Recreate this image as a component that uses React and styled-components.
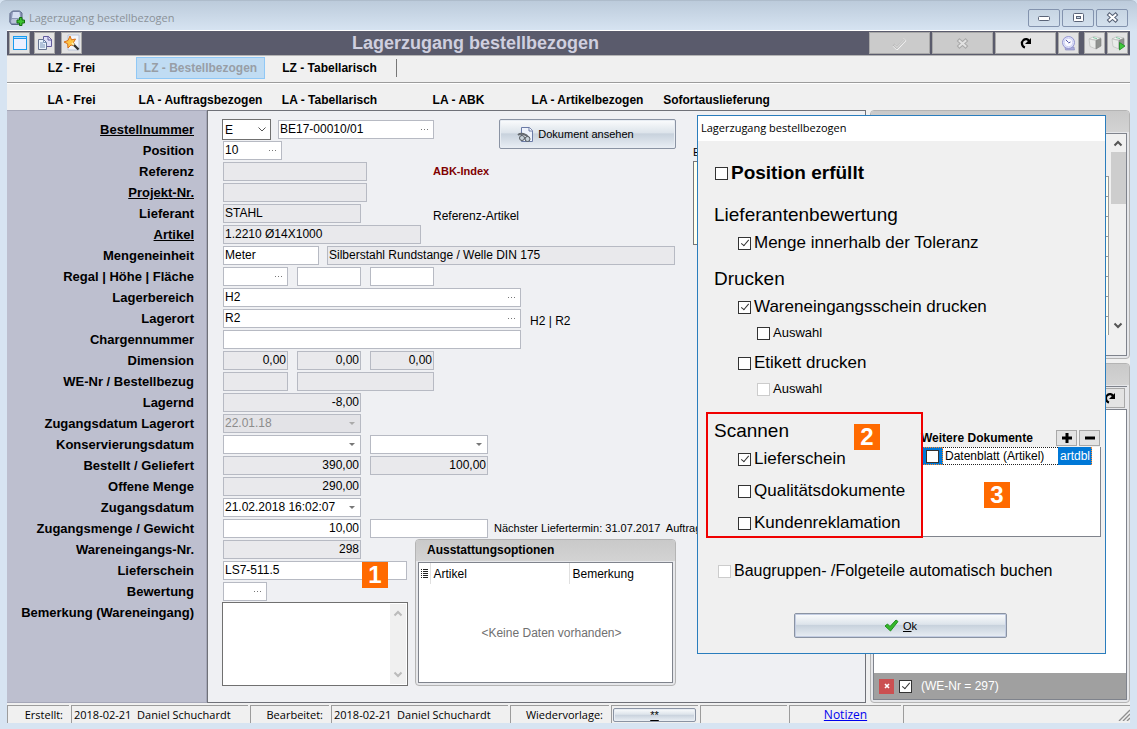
import React from "react";
import styled, { createGlobalStyle, css } from "styled-components";

const ui = `"Open Sans", "Noto Sans", sans-serif`;
const form = `"Liberation Sans", Arial, sans-serif`;

const GlobalStyle = createGlobalStyle`
  *, *::before, *::after { box-sizing: border-box; }
  html, body { margin: 0; padding: 0; }
  body { font: 12px/16px ${form}; color: #000; background: #d7e4f2; }
  button, input, select, textarea { font: inherit; color: inherit; margin: 0; padding: 0; border-radius: 0; }
  svg { display: block; flex: none; }
`;

/* ---------- window ---------- */

const Window = styled.main`
  position: relative;
  display: flex;
  flex-direction: column;
  min-height: 100vh;
  padding: 0 7px 6px;
  border-top: 1px solid #aebccb;
  border-radius: 6px 6px 0 0;
  background: linear-gradient(#bccbdb, #d7e4f2 30px);
  overflow: hidden;
`;

const TitleBar = styled.header`
  display: flex;
  align-items: center;
  gap: 4px;
  height: 29px;
  padding: 4px 2px 0;
  font: 11px/18px ${ui};
  color: #8b9299;
`;

const WindowButtons = styled.div`
  display: flex;
  gap: 2px;
  margin-left: auto;
`;

const WindowButton = styled.button`
  display: grid;
  place-items: center;
  width: 32px;
  height: 18px;
  border: 1px solid #8393ae;
  border-radius: 2px;
  background: linear-gradient(#c7d5e3, #d3e0ed);
`;

const Toolbar = styled.div`
  display: flex;
  align-items: center;
  gap: 2px;
  height: 25px;
  padding: 0 2px;
  border-top: 1px solid #fff;
  background: #5a5b6c;
`;

const ToolButton = styled.button`
  display: grid;
  place-items: center;
  width: ${(p) => (p.$wide ? 61 : 21)}px;
  height: 22px;
  border: 1px solid #a8a8a8;
  background: ${(p) => (p.disabled ? "#cbcbcb" : "#e3e3e3")};
`;

const ToolGap = styled.span`
  width: ${(p) => p.$w}px;
`;

const ToolTitle = styled.h1`
  flex: 1;
  margin: 0;
  text-align: center;
  font: bold 18px/22px ${form};
  color: #cfcfdf;
`;

/* ---------- navigation ---------- */

const Nav = styled.nav`
  display: flex;
  align-items: flex-start;
  height: ${(p) => (p.$first ? 28 : 27)}px;
  background: #f0f0f0;
  border-top: ${(p) => (p.$first ? "1px solid #b5b5b5" : "1px solid #fff")};
  border-bottom: ${(p) => (p.$first ? "1px solid #9c9c9c" : "0")};
  padding-top: ${(p) => (p.$first ? 1 : 5)}px;
`;

const NavItem = styled.button`
  width: 129px;
  height: 22px;
  border: 1px solid ${(p) => (p.$current ? "#90c8f6" : "transparent")};
  background: ${(p) => (p.$current ? "#c0dcf3" : "transparent")};
  color: ${(p) => (p.$current ? "#989ea6" : "#000")};
  font-weight: bold;
  white-space: nowrap;
`;

const NavDivider = styled.span`
  width: 1px;
  height: 18px;
  margin: 2px 0 0 2px;
  background: #777;
`;

/* ---------- work area ---------- */

const Work = styled.div`
  flex: 1;
  display: grid;
  grid-template-columns: 200px minmax(0, 1fr) 260px;
  background: #f0f0f0;
`;

const Labels = styled.div`
  display: flex;
  flex-direction: column;
  padding: 8px 12px 0 0;
  border: solid #a5a7b8;
  border-width: 1px 1px 1px 0;
  background: #bdbfcf;
`;

const Caption = styled.label`
  height: 21px;
  font: bold 13px/21px ${form};
  text-align: right;
  white-space: nowrap;
  text-decoration: ${(p) => (p.$link ? "underline" : "none")};
`;

const Form = styled.form`
  margin-right: 4px;
  padding: 8px 0 0 14px;
  border: 1px solid #6f7178;
  background: #eff0f3;
  font-size: 12px;
  overflow: hidden;
`;

const FormTop = styled.div`
  display: flex;
`;

const FormTopRows = styled.div`
  width: 454px;
`;

const Split = styled.div`
  display: flex;
  justify-content: space-between;
  height: 42px;
`;

const Row = styled.div`
  display: flex;
  align-items: center;
  gap: ${(p) => p.$gap ?? 9}px;
  height: 21px;
  padding-left: ${(p) => (p.$flush ? 0 : 1)}px;
`;

const Slot = styled.div`
  width: 201px;
`;

const Cluster = styled.div`
  display: flex;
  gap: 9px;
`;

const Note = styled.span`
  align-self: ${(p) => (p.$low ? "flex-end" : "center")};
  font-size: ${(p) => (p.$small ? 11 : 12)}px;
  line-height: 15px;
  font-weight: ${(p) => (p.$alert ? "bold" : "normal")};
  color: ${(p) => (p.$alert ? "#800000" : "#000")};
  white-space: pre;
`;

const FieldBox = styled.span`
  display: flex;
  align-items: center;
  width: ${(p) => p.$w}px;
  height: 19px;
  border: 1px solid #b7bac3;
  background: ${(p) => (p.$off ? "#e3e3e7" : p.$ro ? "#e9e9ec" : "#fff")};
  color: ${(p) => (p.$off ? "#8c8c8c" : "#000")};
`;

const FieldInput = styled.input`
  flex: 1;
  min-width: 0;
  height: 17px;
  padding: 0 1px;
  border: 0;
  outline: 0;
  background: transparent;
  text-align: ${(p) => (p.$right ? "right" : "left")};
  line-height: 17px;
`;

const FieldButton = styled.button`
  display: grid;
  place-items: center;
  width: 17px;
  height: 17px;
  border: 0;
  background: transparent;
`;

const SelectBox = styled.span`
  position: relative;
  width: 49px;
  height: 21px;

  svg {
    position: absolute;
    right: 4px;
    top: 7px;
    pointer-events: none;
  }
`;

const Select = styled.select`
  appearance: none;
  width: 100%;
  height: 21px;
  padding: 0 2px;
  border: 1px solid #707070;
  background: #fff;
`;

const GlossButton = styled.button`
  display: flex;
  align-items: center;
  justify-content: center;
  gap: 4px;
  width: ${(p) => p.$w}px;
  height: ${(p) => p.$h}px;
  padding: 0 ${(p) => p.$after ?? 0}px 0 0;
  border: 1px solid #8a93a3;
  border-radius: 2px;
  box-shadow: inset 0 0 0 1px ${(p) => (p.$focus ? "#c3cde2" : "#e8edf3")};
  background: linear-gradient(#fbfcfd, #dde4eb 45%, #c8d2dd 50%, #e9eef4);
  font: 11px/14px ${form};
`;

const SideNote = styled.div`
  flex: 1;
  margin: 24px 6px 0 17px;
  font-size: 11px;
`;

const SideNoteLabel = styled.label`
  display: block;
  height: 18px;
  line-height: 18px;
`;

const SideNoteText = styled.textarea`
  display: block;
  width: 100%;
  height: 84px;
  border: 1px solid #777;
  background: #ffffee;
  resize: none;
`;

const FormBottom = styled.div`
  display: flex;
  gap: 7px;
`;

const FormBottomRows = styled.div`
  width: 186px;
`;

const Anchor = styled.div`
  position: relative;
`;

const Memo = styled.div`
  display: flex;
  height: 84px;
  border: 1px solid #707070;
  background: #fff;
  padding: 1px;
`;

const MemoText = styled.textarea`
  flex: 1;
  min-width: 0;
  border: 0;
  outline: 0;
  resize: none;
  background: transparent;
`;

const ScrollTrack = styled.div`
  display: flex;
  flex-direction: column;
  align-items: center;
  justify-content: space-between;
  width: 16px;
  padding: 6px 0;
  background: #f0f0f0;
`;

const ScrollThumb = styled.div`
  width: 15px;
  height: 52px;
  margin-top: 5px;
  margin-bottom: auto;
  background: #cdcdcd;
`;

/* numbered call-out markers */
const Marker = styled.span`
  position: absolute;
  z-index: 2;
  top: ${(p) => p.$top}px;
  right: ${(p) => p.$right}px;
  width: 26px;
  height: 26px;
  background: #ff6a00;
  color: #fff;
  text-align: center;
  font: bold 24px/26px ${form};
`;

/* ---------- grouped panels ---------- */

const Panel = styled.section`
  display: flex;
  flex-direction: column;
  border: 1px solid #b4b4b4;
  border-radius: 4px;
  background: #e6e7ea;
  padding: 0 2px 2px;
`;

const OptionsPanel = styled(Panel)`
  width: 261px;
  height: 147px;
`;

const PanelTitle = styled.h2`
  margin: 0 -2px 1px;
  height: 21px;
  padding-left: 11px;
  border-radius: 3px 3px 0 0;
  background: linear-gradient(#c9c9c9, #d3d3d3);
  font: bold 12px/20px ${form};
`;

const PanelFrame = styled.div`
  flex: 1;
  display: flex;
  flex-direction: ${(p) => (p.$row ? "row" : "column")};
  padding-bottom: ${(p) => (p.$row ? 20 : 0)}px;
  border: 1px solid #7f838c;
  background: ${(p) => (p.$row ? "#f0f0f0" : "#fff")};
  min-height: 0;
`;

const OptionsTable = styled.table`
  width: 100%;
  table-layout: fixed;
  border-collapse: collapse;
  font-size: 12px;

  th {
    height: 21px;
    padding: 0 3px;
    border-right: 1px solid #e0e0e0;
    text-align: left;
    font-weight: normal;
  }
  th:first-child { width: 11px; padding: 0 2px; }
  th:nth-child(2) { width: 139px; }
  th:last-child { border-right: 0; }
  td {
    height: 98px;
    padding: 0 0 0 12px;
    text-align: center;
    color: #707070;
  }
`;

const Side = styled.aside`
  display: flex;
  flex-direction: column;
  gap: 4px;
`;

const SideTop = styled(Panel)`
  height: 249px;
`;

const SideBottom = styled(Panel)`
  flex: 1;
`;

const RecordGrid = styled.div`
  flex: 1;
  margin: 42px 1px 0 0;
  border-top: 1px solid #9a9a9a;
  border-right: 1px solid #9a9a9a;
  background: repeating-linear-gradient(#fffff0 0 19px, #9a9a9a 19px 20px);
`;

const SideTools = styled.div`
  display: flex;
  justify-content: flex-end;
  padding: 1px 2px;
  border-top: 1px solid #7f838c;
  height: 23px;
`;

const RefreshButton = styled.button`
  display: grid;
  place-items: center;
  width: 31px;
  height: 20px;
  border: 1px solid #a8a8a8;
  background: #e3e3e3;
`;

const FilterBar = styled.div`
  display: flex;
  align-items: center;
  gap: 5px;
  height: 26px;
  margin-top: auto;
  padding-left: 5px;
  background: #a0a0a0;
  color: #fff;
`;

const FilterLabel = styled.label`
  display: flex;
  align-items: center;
  gap: 9px;
`;

const ClearButton = styled.button`
  display: grid;
  place-items: center;
  width: 15px;
  height: 15px;
  border: 0;
  background: #cb5051;
`;

/* ---------- dialog ---------- */

const Dialog = styled.section`
  position: absolute;
  z-index: 5;
  top: 114px;
  right: 31px;
  width: 409px;
  padding-bottom: 15px;
  border: 1px solid #2a7dbd;
  background: #f0f0f0;
`;

const DialogTitle = styled.h2`
  margin: 0;
  height: 25px;
  padding-left: 3px;
  background: #fff;
  font: 11px/24px ${ui};
`;

const DialogBody = styled.div`
  padding: 20px 4px 0 8px;
`;

const Block = styled.div`
  display: flex;
  flex-direction: column;
  gap: 4px;
  padding-left: 8px;
  margin-bottom: ${(p) => p.$after ?? 0}px;
`;

const Heading = styled.h3`
  margin: 0;
  font: 19px/24px ${form};
`;

const tick = css`
  &:checked::after {
    content: "";
    position: absolute;
    left: 4px;
    top: 0;
    width: 4px;
    height: 8px;
    border: solid #333;
    border-width: 0 1px 1px 0;
    transform: rotate(40deg);
  }
`;

const Box = styled.input.attrs({ type: "checkbox" })`
  appearance: none;
  position: relative;
  flex: none;
  width: 13px;
  height: 13px;
  border: 1px solid #333;
  background: #fff;
  ${tick}
  &:disabled { border-color: #ccc; }
`;

const indent = { 1: 24, 2: 43, wide: 4 };

const Check = styled.label`
  display: flex;
  align-items: center;
  gap: 3px;
  font-size: ${(p) => p.$size ?? 17}px;
  line-height: ${(p) => (p.$level === 2 ? 20 : 24)}px;
  font-weight: ${(p) => (p.$strong ? "bold" : "normal")};
  padding-left: ${(p) => indent[p.$level] ?? 1}px;
  white-space: nowrap;
`;

const ScanArea = styled.div`
  display: flex;
  margin-bottom: 21px;
`;

const ScanBox = styled.div`
  position: relative;
  z-index: 1;
  width: 217px;
  height: 126px;
  padding: 5px 0 0 6px;
  border: 2px solid #f00000;
`;

const ScanList = styled.div`
  display: flex;
  flex-direction: column;
  gap: 8px;
  margin-top: 4px;
`;

const Documents = styled.div`
  flex: 1;
  display: flex;
  flex-direction: column;
  margin-left: -2px;
  padding: 18px 0 1px;
`;

const DocumentsHead = styled.div`
  display: flex;
  align-items: flex-start;
  gap: 2px;
  height: 17px;
  padding-right: 1px;
`;

const DocumentsTitle = styled.h4`
  flex: 1;
  margin: 0;
  font: bold 12px/16px ${form};
  white-space: nowrap;
`;

const SmallButton = styled.button`
  display: grid;
  place-items: center;
  width: 21px;
  height: 16px;
  border: 1px solid #a8a8a8;
  background: #e3e3e3;
`;

const DocumentsList = styled.div`
  position: relative;
  flex: 1;
  border: solid #7f838c;
  border-width: 0 1px 1px 0;
  background: #fff;
`;

const DocumentRow = styled.div`
  display: flex;
  align-items: center;
  height: 18px;
  margin-right: 8px;
  font-size: 12px;
  line-height: 18px;
`;

const DocumentName = styled.label`
  flex: 1;
  display: flex;
  align-items: center;
  gap: 2px;
  height: 18px;
  border: dotted #222;
  border-width: 1px 0;
  white-space: nowrap;
`;

const DocumentPick = styled.span`
  display: grid;
  place-items: center;
  width: 22px;
  height: 18px;
  border: 1px dotted #ff8728;
  background: #0078d7;
`;

const DocumentCode = styled.span`
  height: 18px;
  padding: 0 1px 0 2px;
  border-right: 1px dotted #ff8728;
  background: #0078d7;
  color: #fff;
`;

const Actions = styled.div`
  display: flex;
  justify-content: center;
  padding: 30px 6px 0 0;
`;

/* ---------- status bar ---------- */

const StatusBar = styled.footer`
  display: flex;
  gap: 2px;
  height: 20px;
  padding-top: 2px;
  background: #f0f0f0;
  font: 11px/17px ${ui};
`;

const StatusCell = styled.div`
  display: flex;
  align-items: center;
  justify-content: ${(p) => p.$align ?? "flex-start"};
  width: ${(p) => (p.$w ? `${p.$w}px` : "auto")};
  flex: ${(p) => (p.$w ? "none" : 1)};
  height: 18px;
  padding: 0 ${(p) => p.$pad ?? 2}px;
  border: solid #9c9c9c;
  border-width: 1px 0 0 1px;
  white-space: pre;
`;

const StatusLink = styled.a`
  color: #0000ee;
  font-size: 12px;
`;

/* ---------- drawings ---------- */

const AppIcon = () => (
  <svg width="16" height="16" viewBox="0 0 16 16">
    <path d="M1 3.500 3.500 1h7L13 3v7l-2 4.500H2.500L.8 12z" fill="#8d98b8" stroke="#5d6989" />
    <path d="M4 2h6.500l.8 6H3z" fill="#d5def2" />
    <path d="m2 11 1-2h9l-1 4H2.500z" fill="#b9c2d8" />
    <path d="M10.500 7.500h2.500V10h2.500v3H13v2.500h-2.500V13H8v-3h2.500z" fill="#3ec331" stroke="#146f10" />
  </svg>
);

const WindowIcon = () => (
  <svg width="16" height="16" viewBox="0 0 16 16">
    <rect x="1.500" y="1.500" width="13" height="13" fill="#eef0ff" stroke="#1a9bf0" />
    <path d="M1 1h14v3H1z" fill="#1a9bf0" />
    <path d="M2 2h12v1H2z" fill="#a9dcff" />
  </svg>
);

const CopyIcon = () => (
  <svg width="16" height="16" viewBox="0 0 16 16">
    <path d="M6.500 1.500h5l3 3v7h-8z" fill="#dfe0f8" stroke="#615b9c" />
    <path d="M11 1v4h4" fill="none" stroke="#615b9c" />
    <path d="M1.500 4.500h5l3 3v7h-8z" fill="#e8f2fb" stroke="#677591" />
    <path d="M6.500 4.500v3h3M3 8h3M3 10h5M3 12h5" fill="none" stroke="#7b94b8" />
  </svg>
);

const WandIcon = () => (
  <svg width="18" height="18" viewBox="0 0 18 18">
    <path d="M5 1h11v15H5z" fill="#f2f5fb" stroke="#b9c4d8" />
    <path d="m7 2 1.500 3.800L12.500 5 10.500 8.500 12 12 8 11 5 14l-.3-4.200L1 8l4-1.500z" fill="#ffc545" stroke="#d9701a" />
    <path d="m10 10 5.500 5.500" stroke="#333" strokeWidth="2.400" />
    <path d="m9 9 2 2" stroke="#fff2b0" strokeWidth="2" />
  </svg>
);

const TickIcon = () => (
  <svg width="15" height="13" viewBox="0 0 15 13">
    <path d="m2 8 3 3 8-8.500" fill="none" stroke="#fafafa" strokeWidth="3.600" />
    <path d="m1.700 7.500 3.100 3 7.700-8" fill="none" stroke="#b4b4b4" strokeWidth="3" />
    <path d="m2.200 7.800 2.700 2.500 7.500-7.800" fill="none" stroke="#d2d2d2" strokeWidth="1.600" />
  </svg>
);

const CrossIcon = ({ dark }) => (
  <svg width="13" height="11" viewBox="0 0 13 11">
    <path d="m2 1.500 9 8M11 1.500l-9 8" stroke={dark ? "#566075" : "#a9a9a9"} strokeWidth="4" />
    <path d="m2.800 2.200 7.400 6.600M10.200 2.200 2.800 8.800" stroke={dark ? "#fff" : "#e2e2e2"} strokeWidth="2" />
  </svg>
);

const RefreshIcon = () => (
  <svg width="12" height="12" viewBox="0 0 12 12">
    <path d="M5 10.500C1.500 9.500 1 5 3.500 3c2-1.500 4.500-1 5.500 1" fill="none" stroke="#000" strokeWidth="2.200" />
    <path d="M11 1v6H5z" fill="#000" />
  </svg>
);

const ClockIcon = () => (
  <svg width="16" height="16" viewBox="0 0 16 16">
    <path d="M4 12h9l.5 3h-9z" fill="#a9aadb" stroke="#8587bd" strokeWidth=".6" />
    <circle cx="7.500" cy="7.500" r="6" fill="#dcdffc" stroke="#9496cf" />
    <circle cx="7.500" cy="7.500" r="4.200" fill="#f8f8ff" stroke="#c9cbee" strokeWidth=".8" />
    <path d="M7.500 7.500 5 5M7.500 8l2-1" stroke="#5458a5" />
  </svg>
);

const CubeIcon = ({ play }) => (
  <svg width="16" height="16" viewBox="0 0 16 16">
    <path d="m2 4 5-2.500L14 3 9 5z" fill="#f4f6f4" stroke="#b0b4b0" strokeWidth=".6" />
    <path d="m2 4 7 1.500V14l-6-2.500z" fill="#e9ebe9" stroke="#b5b8b5" strokeWidth=".6" />
    <path d="m9 5.500 5-2V11l-5 3z" fill="#8f928f" stroke="#808280" strokeWidth=".6" />
    <path d="m6 2.500 4 1.200" stroke="#7fc7a3" />
    {play && <path d="M9.500 7.500v7.500l5.500-4z" fill="#3fc83a" stroke="#1d8a22" strokeWidth=".8" />}
  </svg>
);

const DocumentIcon = () => (
  <svg width="17" height="17" viewBox="0 0 17 17">
    <path d="M4.500 1.500h8l3 3v11h-11z" fill="#eef3fc" stroke="#6b7ba6" />
    <path d="M12 1.500v3.500h3.500" fill="#fff" stroke="#6b7ba6" />
    <path d="M1 9c3-2.500 8-1 11 3" fill="none" stroke="#666b70" strokeWidth="2" />
    <circle cx="5" cy="12" r="2.500" fill="#c8d2da" stroke="#555b61" />
    <circle cx="10.500" cy="13" r="2.500" fill="#c8d2da" stroke="#555b61" />
  </svg>
);

const OkIcon = () => (
  <svg width="15" height="13" viewBox="0 0 15 13">
    <path d="m1 7 2.500-2 2.500 2.500L12 1l2 1.500L6.500 12z" fill="#35b82b" stroke="#1f8f1c" />
  </svg>
);

const Dots = () => (
  <svg width="7" height="1" viewBox="0 0 7 1">
    <path d="M0 0h1v1H0zM3 0h1v1H3zM6 0h1v1H6z" fill="#777" />
  </svg>
);

const Triangle = ({ color = "#777" }) => (
  <svg width="6" height="3" viewBox="0 0 6 3">
    <path d="M0 0h6L3 3z" fill={color} />
  </svg>
);

const Chevron = ({ up, color = "#555", thick = 2 }) => (
  <svg width="10" height="7" viewBox="0 0 10 7">
    <path d={up ? "M1.500 5.500 5 2l3.500 3.500" : "M1.500 1.500 5 5l3.500-3.500"} fill="none" stroke={color} strokeWidth={thick} />
  </svg>
);

/* ---------- composed parts ---------- */

function Field({ id, label, w, value = "", ro, off, right, lookup, date }) {
  return (
    <FieldBox $w={w} $ro={ro} $off={off}>
      <FieldInput
        id={id}
        aria-label={label}
        defaultValue={value}
        readOnly={ro}
        disabled={off}
        $right={right}
      />
      {lookup && (
        <FieldButton type="button" aria-label="Auswahl"><Dots /></FieldButton>
      )}
      {date && (
        <FieldButton type="button" aria-label="Kalender" disabled={off}>
          <Triangle color={off ? "#aaa" : "#777"} />
        </FieldButton>
      )}
    </FieldBox>
  );
}

const captions = [
  ["nr", "Bestellnummer", true],
  ["pos", "Position"],
  ["ref", "Referenz"],
  ["projekt", "Projekt-Nr.", true],
  ["lieferant", "Lieferant"],
  ["artikel", "Artikel", true],
  ["me", "Mengeneinheit"],
  ["regal", "Regal | Höhe | Fläche"],
  ["bereich", "Lagerbereich"],
  ["ort", "Lagerort"],
  ["charge", "Chargennummer"],
  ["dim", "Dimension"],
  ["we", "WE-Nr / Bestellbezug"],
  ["lagernd", "Lagernd"],
  ["zdort", "Zugangsdatum Lagerort"],
  ["kons", "Konservierungsdatum"],
  ["bestellt", "Bestellt / Geliefert"],
  ["offen", "Offene Menge"],
  ["zd", "Zugangsdatum"],
  ["zm", "Zugangsmenge / Gewicht"],
  ["wenr", "Wareneingangs-Nr."],
  ["ls", "Lieferschein"],
  ["bew", "Bewertung"],
  ["bem", "Bemerkung (Wareneingang)"],
];

function EntryForm() {
  return (
    <Form onSubmit={(e) => e.preventDefault()}>
      <FormTop>
        <FormTopRows>
          <Split>
            <div>
              <Row $flush $gap={7}>
                <SelectBox>
                  <Select id="nr" defaultValue="E"><option>E</option></Select>
                  <Chevron thick={1} />
                </SelectBox>
                <Field label="Bestellung" w={156} value="BE17-00010/01" lookup />
              </Row>
              <Row><Field id="pos" w={59} value="10" lookup /></Row>
            </div>
            <GlossButton type="button" $w={177} $h={30} $after={24}>
              <DocumentIcon />
              Dokument ansehen
            </GlossButton>
          </Split>
          <Row>
            <Slot><Field id="ref" w={144} ro /></Slot>
            <Note $alert $small>ABK-Index</Note>
          </Row>
          <Row><Field id="projekt" w={144} ro /></Row>
          <Row>
            <Slot><Field id="lieferant" w={138} value="STAHL" ro /></Slot>
            <Note $low>Referenz-Artikel</Note>
          </Row>
          <Row><Field id="artikel" w={198} value="1.2210 Ø14X1000" ro /></Row>
        </FormTopRows>
        <SideNote>
          <SideNoteLabel htmlFor="sidenote">E</SideNoteLabel>
          <SideNoteText id="sidenote" />
        </SideNote>
      </FormTop>
      <Row $gap={8}>
        <Field id="me" w={96} value="Meter" />
        <Field label="Bezeichnung" w={348} value="Silberstahl Rundstange / Welle DIN 175" ro />
      </Row>
      <Row>
        <Field id="regal" w={65} lookup />
        <Field label="Höhe" w={64} />
        <Field label="Fläche" w={64} />
      </Row>
      <Row><Field id="bereich" w={298} value="H2" lookup /></Row>
      <Row>
        <Field id="ort" w={298} value="R2" lookup />
        <Note $low>H2 | R2</Note>
      </Row>
      <Row><Field id="charge" w={298} /></Row>
      <Row>
        <Field id="dim" w={65} value="0,00" ro right />
        <Field label="Dimension 2" w={64} value="0,00" ro right />
        <Field label="Dimension 3" w={64} value="0,00" ro right />
      </Row>
      <Row>
        <Field id="we" w={65} ro />
        <Field label="Bestellbezug" w={137} ro />
      </Row>
      <Row><Field id="lagernd" w={138} value="-8,00" ro right /></Row>
      <Row><Field id="zdort" w={138} value="22.01.18" off date /></Row>
      <Row>
        <Field id="kons" w={138} date />
        <Field label="Konservierung bis" w={118} date />
      </Row>
      <Row>
        <Field id="bestellt" w={138} value="390,00" ro right />
        <Field label="Geliefert" w={118} value="100,00" ro right />
      </Row>
      <Row><Field id="offen" w={138} value="290,00" ro right /></Row>
      <Row><Field id="zd" w={138} value="21.02.2018 16:02:07" date /></Row>
      <Row $gap={6}>
        <Cluster>
          <Field id="zm" w={138} value="10,00" right />
          <Field label="Gewicht" w={118} />
        </Cluster>
        <Note $small>{"Nächster Liefertermin: 31.07.2017  Auftrag"}</Note>
      </Row>
      <FormBottom>
        <FormBottomRows>
          <Row><Field id="wenr" w={138} value="298" ro right /></Row>
          <Anchor>
            <Row><Field id="ls" w={184} value="LS7-511.5" /></Row>
            <Marker $top={2} $right={20}>1</Marker>
          </Anchor>
          <Row><Field id="bew" w={44} lookup /></Row>
          <Memo>
            <MemoText id="bem" />
            <ScrollTrack>
              <Chevron up color="#bbb" />
              <Chevron color="#bbb" />
            </ScrollTrack>
          </Memo>
        </FormBottomRows>
        <OptionsPanel>
          <PanelTitle>Ausstattungsoptionen</PanelTitle>
          <PanelFrame>
            <OptionsTable>
              <thead>
                <tr>
                  <th>
                    <svg width="7" height="9" viewBox="0 0 7 9">
                      <path d="M0 .5h1m1 0h5M0 2.500h1m1 0h5M0 4.500h1m1 0h5M0 6.500h1m1 0h5M0 8.500h1m1 0h5" stroke="#222" />
                    </svg>
                  </th>
                  <th>Artikel</th>
                  <th>Bemerkung</th>
                </tr>
              </thead>
              <tbody>
                <tr><td colSpan={3}>&lt;Keine Daten vorhanden&gt;</td></tr>
              </tbody>
            </OptionsTable>
          </PanelFrame>
        </OptionsPanel>
      </FormBottom>
    </Form>
  );
}

function SidePanels() {
  return (
    <Side>
      <SideTop>
        <PanelTitle />
        <PanelFrame $row>
          <RecordGrid />
          <ScrollTrack>
            <Chevron up />
            <ScrollThumb />
            <Chevron />
          </ScrollTrack>
        </PanelFrame>
      </SideTop>
      <SideBottom>
        <PanelTitle />
        <SideTools>
          <RefreshButton aria-label="Aktualisieren"><RefreshIcon /></RefreshButton>
        </SideTools>
        <PanelFrame>
          <FilterBar>
            <ClearButton aria-label="Filter entfernen">
              <svg width="6" height="6" viewBox="0 0 6 6"><path d="m1 1 4 4M5 1 1 5" stroke="#fff" strokeWidth="1.600" /></svg>
            </ClearButton>
            <FilterLabel>
              <Box defaultChecked />
              (WE-Nr = 297)
            </FilterLabel>
          </FilterBar>
        </PanelFrame>
      </SideBottom>
    </Side>
  );
}

function BookingDialog() {
  return (
    <Dialog role="dialog" aria-labelledby="dialog-title">
      <DialogTitle id="dialog-title">Lagerzugang bestellbezogen</DialogTitle>
      <DialogBody>
        <Block $after={18}>
          <Check $size={19} $strong><Box />Position erfüllt</Check>
        </Block>
        <Block $after={12}>
          <Heading>Lieferantenbewertung</Heading>
          <Check $level={1}><Box defaultChecked />Menge innerhalb der Toleranz</Check>
        </Block>
        <Block $after={8}>
          <Heading>Drucken</Heading>
          <Check $level={1}><Box defaultChecked />Wareneingangsschein drucken</Check>
          <Check $level={2} $size={13}><Box />Auswahl</Check>
        </Block>
        <Block $after={13}>
          <Check $level={1}><Box />Etikett drucken</Check>
          <Check $level={2} $size={13}><Box disabled />Auswahl</Check>
        </Block>
        <ScanArea>
          <ScanBox>
            <Heading>Scannen</Heading>
            <ScanList>
              <Check $level={1}><Box defaultChecked />Lieferschein</Check>
              <Check $level={1}><Box />Qualitätsdokumente</Check>
              <Check $level={1}><Box />Kundenreklamation</Check>
            </ScanList>
            <Marker $top={10} $right={41}>2</Marker>
          </ScanBox>
          <Documents>
            <DocumentsHead>
              <DocumentsTitle>Weitere Dokumente</DocumentsTitle>
              <SmallButton type="button" aria-label="Hinzufügen">
                <svg width="10" height="10" viewBox="0 0 10 10"><path d="M5 0v10M0 5h10" stroke="#000" strokeWidth="3" /></svg>
              </SmallButton>
              <SmallButton type="button" aria-label="Entfernen">
                <svg width="10" height="10" viewBox="0 0 10 10"><path d="M0 5h10" stroke="#000" strokeWidth="3" /></svg>
              </SmallButton>
            </DocumentsHead>
            <DocumentsList>
              <DocumentRow>
                <DocumentName>
                  <DocumentPick><Box /></DocumentPick>
                  Datenblatt (Artikel)
                </DocumentName>
                <DocumentCode>artdbl</DocumentCode>
              </DocumentRow>
              <Marker $top={35} $right={90}>3</Marker>
            </DocumentsList>
          </Documents>
        </ScanArea>
        <Block>
          <Check $level="wide" $size={16}><Box disabled />Baugruppen- /Folgeteile automatisch buchen</Check>
        </Block>
        <Actions>
          <GlossButton type="button" $w={213} $h={25} $focus>
            <OkIcon />
            <span><u>O</u>k</span>
          </GlossButton>
        </Actions>
      </DialogBody>
    </Dialog>
  );
}

export default function App() {
  return (
    <>
      <GlobalStyle />
      <Window>
        <TitleBar>
          <AppIcon />
          <span>Lagerzugang bestellbezogen</span>
          <WindowButtons>
            <WindowButton aria-label="Minimieren">
              <svg width="12" height="6" viewBox="0 0 12 6"><rect x=".5" y="1.500" width="11" height="4" rx="1" fill="#fff" stroke="#5a6478" /></svg>
            </WindowButton>
            <WindowButton aria-label="Maximieren">
              <svg width="11" height="9" viewBox="0 0 11 9">
                <rect x=".5" y=".5" width="10" height="8" rx="1" fill="#fff" stroke="#5a6478" />
                <rect x="3.500" y="3.500" width="4" height="2" fill="#c7d5e3" stroke="#5a6478" />
              </svg>
            </WindowButton>
            <WindowButton aria-label="Schließen"><CrossIcon dark /></WindowButton>
          </WindowButtons>
        </TitleBar>
        <Toolbar>
          <ToolButton aria-label="Fenster"><WindowIcon /></ToolButton>
          <ToolGap $w={0} />
          <ToolButton aria-label="Kopieren"><CopyIcon /></ToolButton>
          <ToolGap $w={2} />
          <ToolButton aria-label="Assistent"><WandIcon /></ToolButton>
          <ToolTitle>Lagerzugang bestellbezogen</ToolTitle>
          <ToolButton $wide disabled aria-label="Speichern"><TickIcon /></ToolButton>
          <ToolButton $wide disabled aria-label="Verwerfen"><CrossIcon /></ToolButton>
          <ToolButton $wide aria-label="Aktualisieren"><RefreshIcon /></ToolButton>
          <ToolButton aria-label="Verlauf"><ClockIcon /></ToolButton>
          <ToolGap $w={1} />
          <ToolButton aria-label="Artikel"><CubeIcon /></ToolButton>
          <ToolButton aria-label="Artikel starten"><CubeIcon play /></ToolButton>
        </Toolbar>
        <Nav $first>
          <NavItem>LZ - Frei</NavItem>
          <NavItem $current>LZ - Bestellbezogen</NavItem>
          <NavItem>LZ - Tabellarisch</NavItem>
          <NavDivider />
        </Nav>
        <Nav>
          <NavItem>LA - Frei</NavItem>
          <NavItem>LA - Auftragsbezogen</NavItem>
          <NavItem>LA - Tabellarisch</NavItem>
          <NavItem>LA - ABK</NavItem>
          <NavItem>LA - Artikelbezogen</NavItem>
          <NavItem>Sofortauslieferung</NavItem>
        </Nav>
        <Work>
          <Labels>
            {captions.map(([id, text, link]) => (
              <Caption key={id} htmlFor={id} $link={link}>{text}</Caption>
            ))}
          </Labels>
          <EntryForm />
          <SidePanels />
        </Work>
        <StatusBar>
          <StatusCell $w={62} $align="flex-end" $pad={6}>Erstellt:</StatusCell>
          <StatusCell $w={177}>{"2018-02-21  Daniel Schuchardt"}</StatusCell>
          <StatusCell $w={79} $align="flex-end" $pad={6}>Bearbeitet:</StatusCell>
          <StatusCell $w={177}>{"2018-02-21  Daniel Schuchardt"}</StatusCell>
          <StatusCell $w={99} $align="flex-end" $pad={6}>Wiedervorlage:</StatusCell>
          <StatusCell $w={87} $pad={1}>
            <GlossButton $w={83} $h={14}><u>**</u></GlossButton>
          </StatusCell>
          <StatusCell $w={87} />
          <StatusCell $w={112} $align="center"><StatusLink href="#notizen">Notizen</StatusLink></StatusCell>
          <StatusCell $align="flex-end" $pad={0}>
            <svg width="12" height="12" viewBox="0 0 12 12">
              <path d="M1 12 12 1M5 12l7-7M9 12l3-3" stroke="#8f8f8f" strokeWidth="1.400" />
            </svg>
          </StatusCell>
        </StatusBar>
        <BookingDialog />
      </Window>
    </>
  );
}
